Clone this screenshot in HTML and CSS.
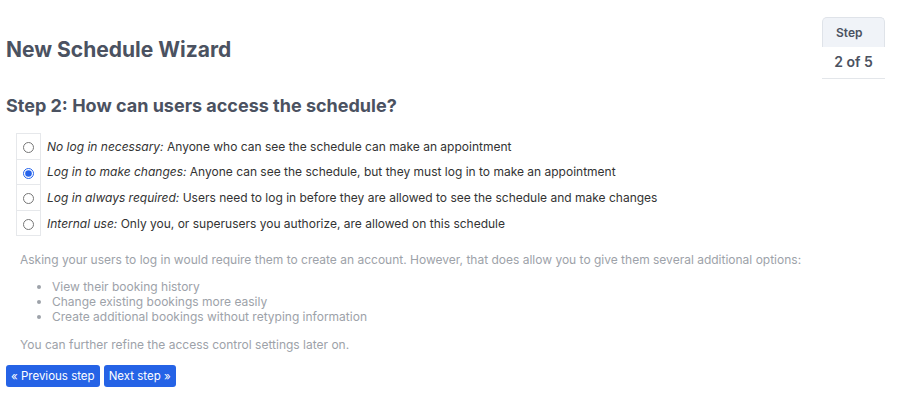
FILE: index.html
```html
<!DOCTYPE html>
<html lang="en">
<head>
  <meta charset="UTF-8">
  <title>New Schedule Wizard</title>
  <link rel="stylesheet" href="styles.css">
</head>
<body>
  <div class="wizard">
    <div class="wizard-header">
      <h1>New Schedule Wizard</h1>
      <div class="step-box">
        <div class="step-label">Step</div>
        <div class="step-count">2 of 5</div>
      </div>
    </div>
    <h2>Step 2: How can users access the schedule?</h2>
    <table class="access-options">
      <tr>
        <td class="radio-cell"><input type="radio" name="access"></td>
        <td><em>No log in necessary:</em> Anyone who can see the schedule can make an appointment</td>
      </tr>
      <tr>
        <td class="radio-cell"><input type="radio" name="access" checked></td>
        <td><em>Log in to make changes:</em> Anyone can see the schedule, but they must log in to make an appointment</td>
      </tr>
      <tr>
        <td class="radio-cell"><input type="radio" name="access"></td>
        <td><em>Log in always required:</em> Users need to log in before they are allowed to see the schedule and make changes</td>
      </tr>
      <tr>
        <td class="radio-cell"><input type="radio" name="access"></td>
        <td><em>Internal use:</em> Only you, or superusers you authorize, are allowed on this schedule</td>
      </tr>
    </table>
    <div class="help">
      <p>Asking your users to log in would require them to create an account. However, that does allow you to give them several additional options:</p>
      <ul>
        <li>View their booking history</li>
        <li>Change existing bookings more easily</li>
        <li>Create additional bookings without retyping information</li>
      </ul>
      <p>You can further refine the access control settings later on.</p>
    </div>
    <div class="actions">
      <button class="btn">&laquo; Previous step</button>
      <button class="btn">Next step &raquo;</button>
    </div>
  </div>
</body>
</html>
```

FILE: styles.css
```css
html, body {
  margin: 0;
  background: #fff;
  font-family: Inter, "Noto Sans", Arial, sans-serif;
}
.wizard {
  padding: 0 15px 0 6px;
}
.wizard-header {
  display: flex;
  justify-content: space-between;
  align-items: flex-start;
}
.wizard h1 {
  margin: 36px 0 0 0;
  font-size: 21px;
  line-height: 28px;
  font-weight: 700;
  color: #4b5261;
}
.step-box {
  margin-top: 17px;
  width: 63px;
  text-align: center;
  border-bottom: 1px solid #e3e6ea;
}
.step-label {
  background: #f0f3f8;
  border: 1px solid #dfe3e9;
  border-bottom: none;
  border-radius: 5px 5px 0 0;
  height: 29px;
  line-height: 29px;
  font-size: 12px;
  font-weight: 600;
  color: #4b5261;
  text-align: left;
  padding-left: 13px;
}
.step-count {
  padding: 6px 0 7px 0;
  font-size: 14px;
  line-height: 18px;
  font-weight: 600;
  color: #4b5261;
}
.wizard h2 {
  margin: 15px 0 0 0;
  font-size: 18px;
  line-height: 24px;
  font-weight: 700;
  color: #4b5261;
}
.access-options {
  margin: 15px 0 0 10px;
  border-collapse: collapse;
  font-size: 12px;
  line-height: 15px;
  color: #333;
}
.access-options td {
  height: 24.6px;
  padding: 0;
  vertical-align: middle;
}
.access-options .radio-cell {
  border: 1px solid #e6e8eb;
  width: 23px;
  text-align: center;
}
.access-options .radio-cell input {
  margin: 0;
  width: 11px;
  height: 11px;
  vertical-align: middle;
  accent-color: #2563eb;
}
.access-options td + td {
  padding-left: 6px;
}
.help {
  margin: 15px 0 0 14px;
  font-size: 12px;
  color: #9da2a9;
}
.help p {
  margin: 0;
  line-height: 18px;
}
.help ul {
  margin: 10px 0 12px 0;
  padding-left: 32px;
  line-height: 15px;
}
.actions {
  margin-top: 11px;
  display: flex;
  gap: 4px;
}
.btn {
  background: #2563e6;
  color: #fff;
  border: none;
  border-radius: 3px;
  height: 22px;
  padding: 0 5px;
  font-family: Inter, "Noto Sans", Arial, sans-serif;
  font-size: 11.5px;
}
```
